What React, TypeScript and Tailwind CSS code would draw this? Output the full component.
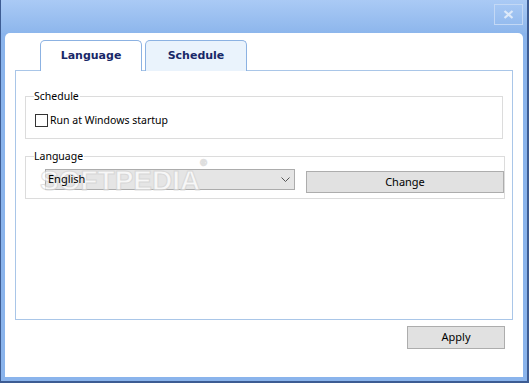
import React, { useState } from 'react'

const GroupBox = ({ title, className, children }: { title: string, className?: string, children: React.ReactNode }) => {
    return (
        <fieldset className={`border border-[#dcdcdc] px-[8px] ${className ?? ''}`}>
            <legend className="px-0 pr-[1px] text-[10.5px] leading-[13px] text-black">{title}</legend>
            {children}
        </fieldset>
    )
}

const SysButton = ({ label, className }: { label: string, className?: string }) => (
    <button className={`bg-[#e1e1e1] border border-[#adadad] text-[11px] text-black ${className ?? ''}`}>
        {label}
    </button>
)

const App = () => {
    const [tab, setTab] = useState<'language' | 'schedule'>('language')
    const [runAtStartup, setRunAtStartup] = useState(false)

    return (
        <div className="w-[529px] h-[383px] flex flex-col bg-[#8ab4ec] border-l border-r-2 border-b-2 border-[#3d5c93] font-['Noto_Sans',sans-serif]">
            {/* title bar */}
            <div className="h-[33px] flex justify-end items-start bg-gradient-to-b from-[#aacaf5] to-[#8db6ec] pr-[4px] pt-[4px]">
                <div className="w-[29px] h-[21px] border border-[#c3d8f5] flex items-center justify-center">
                    <svg width="11" height="9" viewBox="0 0 11 9">
                        <path d="M1.5 1 L9.5 8 M9.5 1 L1.5 8" stroke="#dde9f9" strokeWidth="2.2" />
                    </svg>
                </div>
            </div>

            <div className="flex-1 flex flex-col bg-white mx-[4px] mb-[4px] rounded-t-[5px] pt-[7px]">
                {/* tabs */}
                <div className="flex gap-[3px] ml-[35px] relative z-10 -mb-px">
                    <button
                        onClick={() => setTab('language')}
                        className={`w-[102px] h-[31px] rounded-t-[5px] border border-b-0 border-[#8cb2e2] pt-[1px] font-['DejaVu_Sans',sans-serif] font-bold text-[11px] text-[#182868] ${tab === 'language' ? 'bg-white' : 'bg-[#eaf3fc] h-[30px] self-start'}`}>
                        Language
                    </button>
                    <button
                        onClick={() => setTab('schedule')}
                        className={`w-[102px] h-[31px] rounded-t-[5px] border border-b-0 border-[#8cb2e2] pt-[1px] font-['DejaVu_Sans',sans-serif] font-bold text-[11px] text-[#182868] ${tab === 'schedule' ? 'bg-white' : 'bg-[#eaf3fc] h-[30px] self-start'}`}>
                        Schedule
                    </button>
                </div>

                {/* tab page */}
                <div className="ml-[10px] mr-[10px] h-[250px] border border-[#a9c6e8] px-[9px] pt-[19px] flex flex-col">
                    <GroupBox title="Schedule" className="h-[49px]">
                        <label className="flex items-center gap-[2px] mt-[10px] ml-[1px] text-[10.5px] text-black">
                            <span
                                onClick={() => setRunAtStartup(p => !p)}
                                className="w-[13px] h-[13px] border border-[#333] bg-white flex items-center justify-center text-[10px] leading-none">
                                {runAtStartup ? '✓' : ''}
                            </span>
                            Run at Windows startup
                        </label>
                    </GroupBox>

                    <GroupBox title="Language" className="h-[49px] mt-[11px] pr-0 relative">
                        <div className="flex items-start gap-[11px] mt-[6px] ml-[11px]">
                            <div className="w-[250px] h-[21px] bg-[#e5e5e5] border border-[#acacac] flex items-center justify-between pl-[2px] pr-[4px] text-[11px] text-black">
                                <span className="relative z-10">English</span>
                                <svg width="9" height="6" viewBox="0 0 9 6">
                                    <path d="M0.5 0.5 L4.5 4.5 L8.5 0.5" stroke="#555" fill="none" strokeWidth="1" />
                                </svg>
                            </div>
                            <SysButton label="Change" className="w-[198px] h-[22px] mt-[2px]" />
                        </div>
                        <div className="absolute left-[14px] top-[4px] text-[28px] leading-[28px] font-bold text-white opacity-70 pointer-events-none font-['Liberation_Sans',sans-serif] [-webkit-text-stroke:1px_#d2d2d2]">
                            SOFTPEDIA<sup className="text-[9px] align-top">®</sup>
                        </div>
                    </GroupBox>
                </div>

                <div className="flex justify-end mr-[18px] mt-[6px]">
                    <SysButton label="Apply" className="w-[98px] h-[23px]" />
                </div>
            </div>
        </div>
    )
}

export default App
